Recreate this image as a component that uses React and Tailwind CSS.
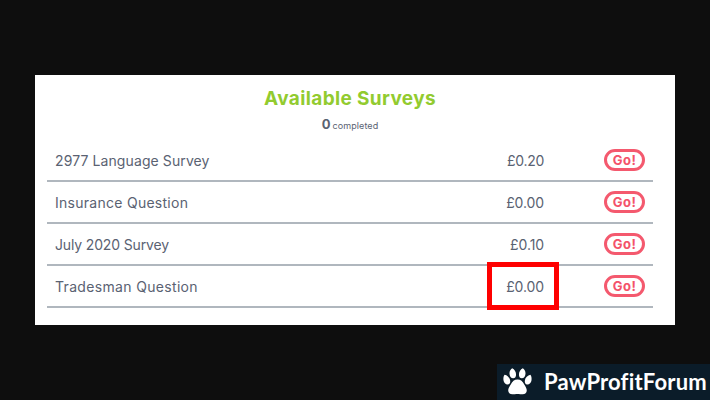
const surveys = [
  { name: '2977 Language Survey', price: '£0.20', track: 'tracking-[0.1px]', priceTrack: 'tracking-[-0.3px]' },
  { name: 'Insurance Question', price: '£0.00', track: 'tracking-[0.27px]', priceTrack: 'tracking-[-0.1px]' },
  { name: 'July 2020 Survey', price: '£0.10', track: 'tracking-[-0.15px]', priceTrack: 'tracking-[-0.1px]' },
  { name: 'Tradesman Question', price: '£0.00', track: 'tracking-[0.33px]', priceTrack: 'tracking-[-0.1px]', marked: true },
];

function Paw() {
  return (
    <svg viewBox="0 0 30 28" preserveAspectRatio="none" className="mb-[2px] h-[27px] w-[29px] shrink-0 fill-white" aria-hidden="true">
      <path d="M15 12c3.200 0 5.500 2.100 7 5 1.300 2.400 2.600 3.800 2.600 6.200 0 2.500-1.700 4.100-4.300 4.100-2 0-3.200-.4-5.300-.4s-3.300.4-5.300.4c-2.600 0-4.300-1.600-4.300-4.100 0-2.400 1.300-3.800 2.600-6.200 1.500-2.900 3.800-5 7-5z" />
      <path d="M9.500.3c2.400 1.100 4.200 4 4 6.900-.1 2-1.200 3.500-2.900 3.500-2.300 0-3.900-2.300-3.900-5C6.700 3.500 7.700 1.200 9.500.3z" />
      <path d="M20.500.3c-2.400 1.100-4.200 4-4 6.900.1 2 1.200 3.500 2.900 3.500 2.300 0 3.900-2.300 3.900-5 0-2.200-1-4.500-2.800-5.400z" />
      <path d="M1.700 7c2.700.5 5.200 2.800 5.700 5.900.4 2.300-.6 4-2.300 4.200-2.200.3-4.200-1.900-4.600-4.500C.2 10.400.600 8.300 1.700 7z" />
      <path d="M28.300 7c-2.700.5-5.200 2.800-5.700 5.900-.4 2.300.6 4 2.300 4.200 2.200.3 4.200-1.900 4.600-4.500.3-2.200-.1-4.300-1.200-5.600z" />
    </svg>
  );
}

export default function App() {
  return (
    <div className="relative h-[400px] w-[710px] overflow-hidden bg-[#0e0e0e] px-[35px] pt-[75px] font-['Inter',sans-serif] text-[#5a6272]">
      <main className="h-[250px] w-[640px] bg-white pl-3 pr-[22px] pt-[12px]">
        <header className="flex flex-col items-center">
          <h1 className="whitespace-nowrap text-[19px] font-bold leading-6 tracking-[0.36px] text-[#92cb2f]">Available Surveys</h1>
          <p className="mt-[3px] flex h-5 items-baseline gap-[2px] whitespace-nowrap leading-5">
            <b className="text-[13px]">0</b>
            <span className="text-[9px] tracking-[0.1px]">completed</span>
          </p>
        </header>
        <ul className="mt-[6px]">
          {surveys.map((s) => (
            <li key={s.name} className="flex h-[42px] items-center border-b-2 border-[#b0b7be] px-2 text-[14px]">
              <span className={`flex-1 whitespace-nowrap ${s.track}`}>{s.name}</span>
              <span className="relative mr-[60px]">
                <span className={s.priceTrack}>{s.price}</span>
                {s.marked && <span className="absolute -right-[15px] top-1/2 h-12 w-[72px] -translate-y-1/2 border-[5px] border-[#fe0000]" />}
              </span>
              <button className="flex h-[22px] w-[41px] items-center justify-center rounded-full border-[3px] border-[#f4596e] text-[13px] font-bold leading-4 tracking-[0.5px] text-[#f4526a]">Go!</button>
            </li>
          ))}
        </ul>
      </main>
      <div className="absolute bottom-0 right-0 flex h-9 w-[213px] items-center bg-[#0b1c29] pl-[6px] text-white">
        <Paw />
        <span className="ml-3 whitespace-nowrap font-['Lato',sans-serif] text-[22px] font-bold leading-9 tracking-[0.18px]">PawProfitForum</span>
      </div>
    </div>
  );
}
